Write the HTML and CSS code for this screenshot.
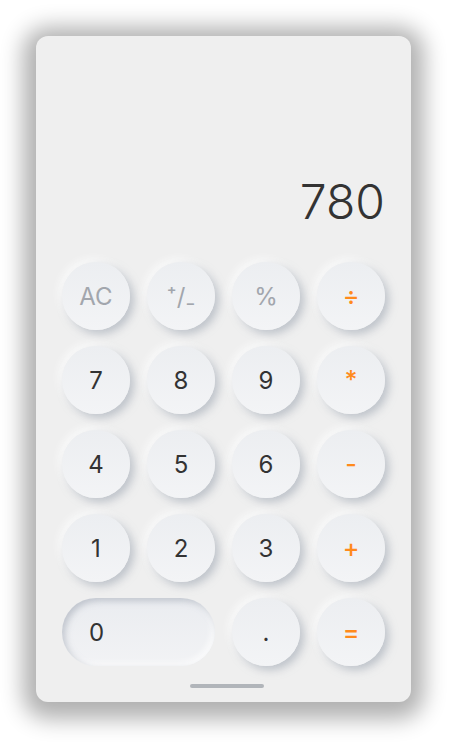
FILE: index.html
```html
<!DOCTYPE html>
<html>
<head>
<meta charset="utf-8">
<link rel="stylesheet" href="styles.css">
</head>
<body>
<div class="card">
  <div class="display"><span class="value">780</span></div>
  <div class="keypad">
    <button class="key fn">AC</button>
    <button class="key fn">⁺/₋</button>
    <button class="key fn">%</button>
    <button class="key op">÷</button>
    <button class="key">7</button>
    <button class="key">8</button>
    <button class="key">9</button>
    <button class="key op">*</button>
    <button class="key">4</button>
    <button class="key">5</button>
    <button class="key">6</button>
    <button class="key op">-</button>
    <button class="key">1</button>
    <button class="key">2</button>
    <button class="key">3</button>
    <button class="key op">+</button>
    <button class="key zero">0</button>
    <button class="key">.</button>
    <button class="key op">=</button>
  </div>
  <div class="home"></div>
</div>
</body>
</html>
```
FILE: styles.css
```css
html, body {
  margin: 0;
  padding: 0;
  background: #ffffff;
}
body {
  font-family: Inter, "Open Sans", "Liberation Sans", sans-serif;
  padding: 36px 0 45px 36px;
  min-height: 747px;
  box-sizing: border-box;
}
.card {
  width: 375px;
  height: 666px;
  box-sizing: border-box;
  border-radius: 12px;
  background: #efefef;
  box-shadow: 0 4px 22px 13px rgba(0, 0, 0, 0.31);
  display: flex;
  flex-direction: column;
}
.display {
  flex: 1;
  display: flex;
  align-items: flex-end;
  justify-content: flex-end;
  padding: 0 26px 36px 0;
}
.value {
  font-size: 48px;
  font-weight: 300;
  color: #333333;
  line-height: 1;
}
.keypad {
  display: grid;
  grid-template-columns: repeat(4, 68px);
  grid-auto-rows: 68px;
  column-gap: 17px;
  row-gap: 16px;
  padding-left: 26px;
}
.key {
  border: none;
  border-radius: 34px;
  background: linear-gradient(180deg, #eceef1 0%, #f3f4f6 100%);
  box-shadow: 4px 4px 9px rgba(150, 158, 172, 0.55), -3px -3px 8px rgba(255, 255, 255, 0.8);
  font-family: Inter, "Open Sans", "Liberation Sans", sans-serif;
  font-size: 24px;
  font-weight: 400;
  color: #333333;
  display: flex;
  align-items: center;
  justify-content: center;
  padding: 0;
}
.fn {
  color: #a2a6ad;
}
.op {
  color: #ff8a1c;
  font-weight: 500;
  font-size: 25px;
}
.zero {
  grid-column: span 2;
  justify-content: flex-start;
  padding-left: 27px;
  background: linear-gradient(180deg, #eaecf0 0%, #f2f3f5 100%);
  box-shadow: inset 3px 3px 6px rgba(150, 158, 172, 0.5), inset -3px -3px 6px rgba(255, 255, 255, 0.8);
}
.home {
  width: 74px;
  height: 4px;
  border-radius: 2px;
  background: #b1b5ba;
  margin: 18px 0 14px 154px;
}
```
